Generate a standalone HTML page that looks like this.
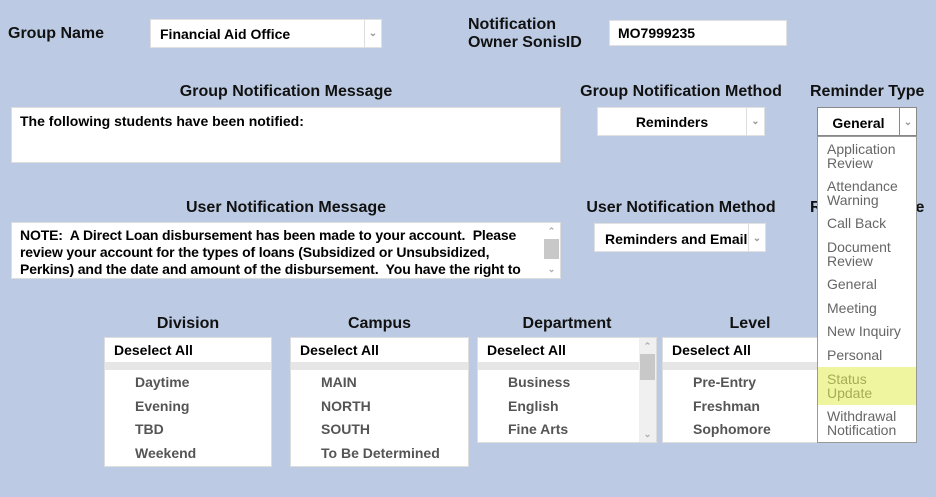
<!DOCTYPE html>
<html><head><style>
body{margin:0;width:936px;height:497px;background:#bccbe3;font-family:"Liberation Sans",Arial,sans-serif;position:relative;overflow:hidden}
.a{position:absolute}
.lb{font-weight:bold;font-size:16px;color:#111}
.box{background:#fff;border:1px solid #ddd;box-sizing:border-box}
.sel{background:#fff;border:1px solid #e0e0e0;box-sizing:border-box;font-weight:bold;font-size:14px;color:#000}
.arr{position:absolute;right:0;top:0;bottom:0;border-left:1px solid #ddd;color:#999;font-size:10px;text-align:center}
.ct{text-align:center}
.list{background:#fff;border:1px solid #ddd;box-sizing:border-box;font-size:14px;font-weight:bold}
.list .h{height:24px;line-height:24px;padding-left:9px;color:#000}
.list .g{height:8px;background:#e6e6e6}
.list .i{height:23.5px;line-height:25px;padding-left:30px;color:#555}
.dd{font-size:14px;color:#666;line-height:13.5px}
</style></head><body>
<div class="a lb" style="left:8px;top:25px">Group Name</div>
<div class="a sel" style="left:150px;top:19px;width:232px;height:29px;line-height:28px;padding-left:9px">Financial Aid Office<div class="arr" style="width:16px">&#8964;</div></div>
<div class="a lb" style="left:468px;top:16px;line-height:18px">Notification<br>Owner SonisID</div>
<div class="a sel" style="left:609px;top:20px;width:178px;height:26px;line-height:25px;padding-left:8px">MO7999235</div>

<div class="a lb ct" style="left:11px;width:550px;top:83px">Group Notification Message</div>
<div class="a box" style="left:11px;top:107px;width:550px;height:56px;padding:5px 8px;font-weight:bold;font-size:14px">The following students have been notified:</div>

<div class="a lb ct" style="left:580px;width:202px;top:83px">Group Notification Method</div>
<div class="a sel ct" style="left:597px;top:107px;width:168px;height:29px;line-height:28px;padding-right:18px">Reminders<div class="arr" style="width:17px">&#8964;</div></div>
<div class="a lb" style="left:810px;top:83px">Reminder Type</div>
<div class="a sel ct" style="left:817px;top:107px;width:100px;height:29px;line-height:30px;padding-right:17px;border-color:#888">General<div class="arr" style="width:16px;border-color:#888">&#8964;</div></div>

<div class="a lb ct" style="left:11px;width:550px;top:199px">User Notification Message</div>
<div class="a box" style="left:11px;top:222px;width:550px;height:57px;padding:4px 24px 0 8px;font-weight:bold;font-size:14px;line-height:17px;overflow:hidden;letter-spacing:-0.15px">NOTE:&nbsp; A Direct Loan disbursement has been made to your account.&nbsp; Please review your account for the types of loans (Subsidized or Unsubsidized, Perkins) and the date and amount of the disbursement.&nbsp; You have the right to cancel all or part of the loan within 14 days of the disbursement.
<div style="position:absolute;right:0;top:0;width:17px;height:57px;background:#fff;color:#aaa;font-size:9px;text-align:center;line-height:12px"><div style="position:absolute;top:2px;width:17px">&#8963;</div><div style="position:absolute;top:16px;left:1px;width:15px;height:20px;background:#c8c8c8"></div><div style="position:absolute;top:40px;width:17px">&#8964;</div></div></div>

<div class="a lb ct" style="left:580px;width:202px;top:199px">User Notification Method</div>
<div class="a sel" style="left:594px;top:223px;width:172px;height:29px;line-height:30px;padding-left:10px">Reminders and Email<div class="arr" style="width:16px">&#8964;</div></div>
<div class="a lb" style="left:810px;top:199px">Reminder Type</div>

<div class="a lb ct" style="left:104px;width:168px;top:315px">Division</div>
<div class="a list" style="left:104px;top:337px;width:168px;height:130px"><div class="h">Deselect All</div><div class="g"></div><div class="i">Daytime</div><div class="i">Evening</div><div class="i">TBD</div><div class="i">Weekend</div></div>
<div class="a lb ct" style="left:290px;width:179px;top:315px">Campus</div>
<div class="a list" style="left:290px;top:337px;width:179px;height:130px"><div class="h">Deselect All</div><div class="g"></div><div class="i">MAIN</div><div class="i">NORTH</div><div class="i">SOUTH</div><div class="i">To Be Determined</div></div>
<div class="a lb ct" style="left:477px;width:180px;top:315px">Department</div>
<div class="a list" style="left:477px;top:337px;width:180px;height:106px;overflow:hidden"><div class="h">Deselect All</div><div class="g"></div><div class="i">Business</div><div class="i">English</div><div class="i">Fine Arts</div>
<div style="position:absolute;right:0;top:0;width:17px;height:106px;background:#f0f0f0;color:#aaa;font-size:9px;text-align:center;line-height:12px"><div style="position:absolute;top:2px;width:17px">&#8963;</div><div style="position:absolute;top:16px;left:1px;width:15px;height:26px;background:#c8c8c8"></div><div style="position:absolute;top:90px;width:17px">&#8964;</div></div></div>
<div class="a lb ct" style="left:662px;width:176px;top:315px">Level</div>
<div class="a list" style="left:662px;top:337px;width:180px;height:106px"><div class="h">Deselect All</div><div class="g"></div><div class="i">Pre-Entry</div><div class="i">Freshman</div><div class="i">Sophomore</div></div>

<div class="a dd" style="left:817px;top:136px;width:100px;height:307px;background:#fff;border:1px solid #999;box-sizing:border-box">
<div style="position:absolute;left:9px;top:6px">Application<br>Review</div>
<div style="position:absolute;left:9px;top:43px">Attendance<br>Warning</div>
<div style="position:absolute;left:9px;top:80px">Call Back</div>
<div style="position:absolute;left:9px;top:104px">Document<br>Review</div>
<div style="position:absolute;left:9px;top:141px">General</div>
<div style="position:absolute;left:9px;top:165px">Meeting</div>
<div style="position:absolute;left:9px;top:188px">New Inquiry</div>
<div style="position:absolute;left:9px;top:212px">Personal</div>
<div style="position:absolute;left:0;top:230px;width:98px;height:38px;background:#eef59e"></div>
<div style="position:absolute;left:9px;top:236px;color:#a6ac55">Status<br>Update</div>
<div style="position:absolute;left:9px;top:273px">Withdrawal<br>Notification</div>
</div>
</body></html>
